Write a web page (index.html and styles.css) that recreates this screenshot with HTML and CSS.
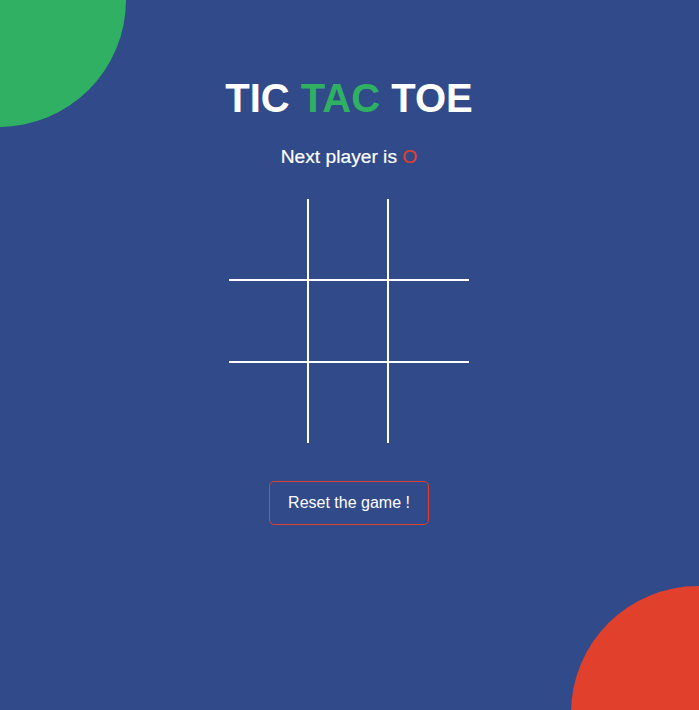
FILE: index.html
```html
<!DOCTYPE html>
<html lang="en">
<head>
<meta charset="utf-8">
<title>Tic Tac Toe</title>
<link rel="stylesheet" href="styles.css">
</head>
<body>
<div class="blob blob-green"></div>
<div class="blob blob-red"></div>
<main class="game">
  <h1 class="title">TIC <span class="green">TAC</span> TOE</h1>
  <p class="status">Next player is <span class="red">O</span></p>
  <div class="board">
    <div class="cell br bb"></div>
    <div class="cell br bb"></div>
    <div class="cell bb"></div>
    <div class="cell br bb"></div>
    <div class="cell br bb"></div>
    <div class="cell bb"></div>
    <div class="cell br"></div>
    <div class="cell br"></div>
    <div class="cell"></div>
  </div>
  <button class="reset" type="button">Reset the game !</button>
</main>
</body>
</html>
```

FILE: styles.css
```css
html, body {
  margin: 0;
  padding: 0;
  height: 100%;
}
body {
  background: #314a8a;
  font-family: "Liberation Sans", Arial, sans-serif;
  color: #ffffff;
  overflow: hidden;
  position: relative;
}
.blob {
  position: absolute;
  border-radius: 50%;
}
.blob-green {
  background: #2fb062;
  width: 254px;
  height: 254px;
  left: -128px;
  top: -127px;
}
.blob-red {
  background: #e0402c;
  width: 254px;
  height: 254px;
  left: 571px;
  top: 586px;
}
.game {
  position: relative;
  display: flex;
  flex-direction: column;
  align-items: center;
  padding-top: 75px;
  padding-right: 1px;
}
.title {
  margin: 0;
  font-size: 40px;
  line-height: 46px;
  font-weight: 700;
}
.green { color: #2fb062; }
.red { color: #e0402c; }
.status {
  margin: 25px 0 0;
  font-size: 19.2px;
  line-height: 22px;
  -webkit-text-stroke: 0.2px #ffffff;
}
.status .red { -webkit-text-stroke: 0.2px #e0402c; }
.board {
  margin-top: 31px;
  display: grid;
  grid-template-columns: 80px 80px 80px;
  grid-template-rows: 82px 82px 80px;
}
.cell {
  box-sizing: border-box;
}
.br { border-right: 2px solid #ffffff; }
.bb { border-bottom: 2px solid #ffffff; }
.reset {
  margin-top: 38px;
  background: transparent;
  border: 1px solid #e0402c;
  border-radius: 5px;
  color: #ffffff;
  font-family: "Liberation Sans", Arial, sans-serif;
  font-size: 16px;
  line-height: 18px;
  padding: 12px 18px;
  cursor: pointer;
}
```
